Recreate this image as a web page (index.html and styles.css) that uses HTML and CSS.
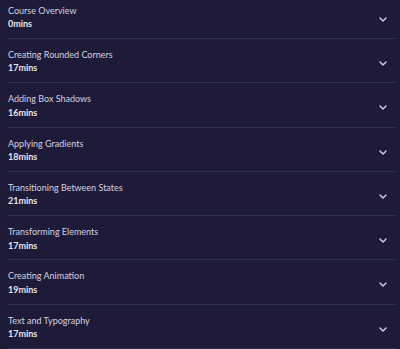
FILE: index.html
```html
<!DOCTYPE html>
<html lang="en">
<head>
    <meta charset="UTF-8">
    <meta name="viewport" content="width=device-width, initial-scale=1.0">
    <title>Course Content</title>
    <link rel="stylesheet" href="styles.css">
</head>
<body>
    <div class="lessons">
        <div class="lesson">
            <div class="lesson-info">
                <div class="lesson-title">Course Overview</div>
                <div class="lesson-time">0mins</div>
            </div>
            <svg class="chevron" viewBox="0 0 8 5"><path d="M1 1l3 3 3-3"/></svg>
        </div>
        <div class="lesson">
            <div class="lesson-info">
                <div class="lesson-title">Creating Rounded Corners</div>
                <div class="lesson-time">17mins</div>
            </div>
            <svg class="chevron" viewBox="0 0 8 5"><path d="M1 1l3 3 3-3"/></svg>
        </div>
        <div class="lesson">
            <div class="lesson-info">
                <div class="lesson-title">Adding Box Shadows</div>
                <div class="lesson-time">16mins</div>
            </div>
            <svg class="chevron" viewBox="0 0 8 5"><path d="M1 1l3 3 3-3"/></svg>
        </div>
        <div class="lesson">
            <div class="lesson-info">
                <div class="lesson-title">Applying Gradients</div>
                <div class="lesson-time">18mins</div>
            </div>
            <svg class="chevron" viewBox="0 0 8 5"><path d="M1 1l3 3 3-3"/></svg>
        </div>
        <div class="lesson">
            <div class="lesson-info">
                <div class="lesson-title">Transitioning Between States</div>
                <div class="lesson-time">21mins</div>
            </div>
            <svg class="chevron" viewBox="0 0 8 5"><path d="M1 1l3 3 3-3"/></svg>
        </div>
        <div class="lesson">
            <div class="lesson-info">
                <div class="lesson-title">Transforming Elements</div>
                <div class="lesson-time">17mins</div>
            </div>
            <svg class="chevron" viewBox="0 0 8 5"><path d="M1 1l3 3 3-3"/></svg>
        </div>
        <div class="lesson">
            <div class="lesson-info">
                <div class="lesson-title">Creating Animation</div>
                <div class="lesson-time">19mins</div>
            </div>
            <svg class="chevron" viewBox="0 0 8 5"><path d="M1 1l3 3 3-3"/></svg>
        </div>
        <div class="lesson">
            <div class="lesson-info">
                <div class="lesson-title">Text and Typography</div>
                <div class="lesson-time">17mins</div>
            </div>
            <svg class="chevron" viewBox="0 0 8 5"><path d="M1 1l3 3 3-3"/></svg>
        </div>
    </div>
</body>
</html>
```

FILE: styles.css
```css
body {
    margin: 0;
    padding: 0;
    background-color: #1d1b37;
    font-family: Lato, "Noto Sans", sans-serif;
    overflow: hidden;
}
.lessons {
    margin-top: -5.4px;
}
.lesson {
    display: flex;
    justify-content: space-between;
    align-items: center;
    margin: 0 4px 0 8px;
    padding: 9px 0 7.3px;
    border-bottom: 1px solid #2f2c55;
}
.lesson-title {
    font-size: 9px;
    line-height: 13.5px;
    color: #d4d2e2;
}
.lesson-time {
    font-size: 9px;
    line-height: 13.5px;
    font-weight: 700;
    color: #e6e4f0;
}
.chevron {
    width: 8px;
    height: 5px;
    margin: 4px 9px 0 0;
    fill: none;
    stroke: #c9c6e6;
    stroke-width: 1.5;
    stroke-linecap: round;
    stroke-linejoin: round;
}
```
